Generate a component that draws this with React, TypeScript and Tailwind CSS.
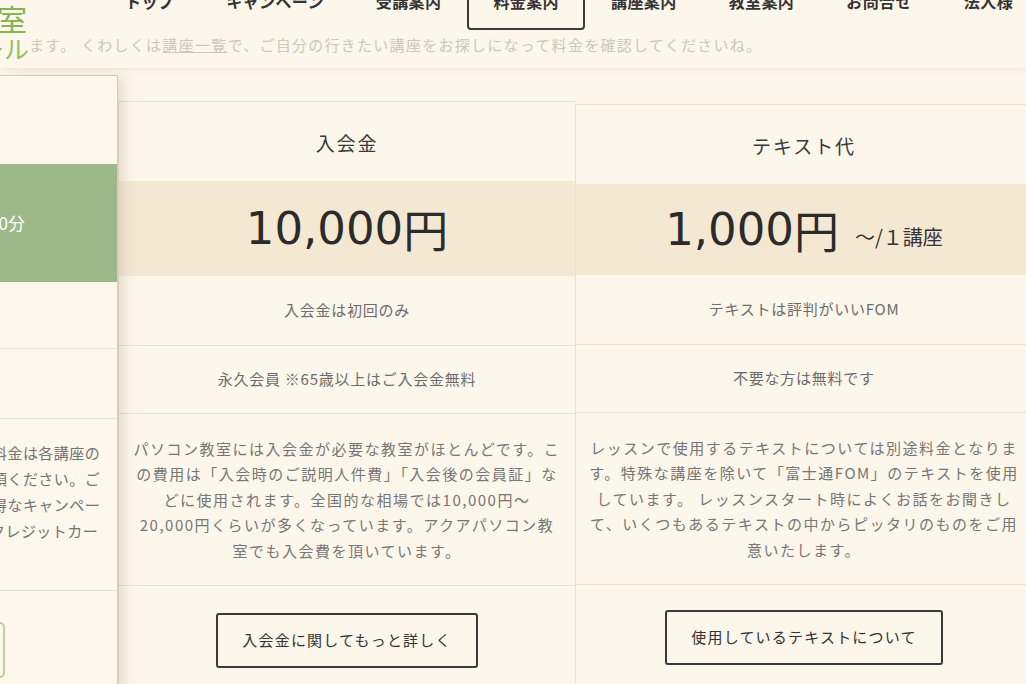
import React from "react";

const navs = ["トップ", "キャンペーン", "受講案内", "料金案内", "講座案内", "教室案内", "お問合せ", "法人様"];

type CardProps = {
  title: string;
  price: string;
  unit?: string;
  r1: string;
  r2: string;
  lines: string[];
  btn: string;
  top: string;
  priceH: string;
  btnPad: string;
};

function Card({ title, price, unit, r1, r2, lines, btn, top, priceH, btnPad }: CardProps) {
  return (
    <section className={`w-[457px] shrink-0 border-t border-l border-[#ebe1cf] ${top}`}>
      <div className="h-[79px] flex items-center justify-center pt-[4px] text-[19px] tracking-[0.1em] text-[#3a3a3a]">
        {title}
      </div>
      <div className={`${priceH} bg-[#f5e8d3] flex items-center justify-center text-[#2b2b2b]`}>
        <span className="font-['DejaVu_Sans',sans-serif] text-[45px] leading-none">{price}</span>
        <span className="text-[45px] leading-none">円</span>
        {unit && <span className="ml-[16px] mt-[14px] text-[20px] leading-none text-[#333]">{unit}</span>}
      </div>
      <div className="h-[70px] border-b border-[#ebe1cf] flex items-center justify-center text-[15px] tracking-[0.05em] text-[#6c6c6c]">
        {r1}
      </div>
      <div className="h-[68px] border-b border-[#ebe1cf] flex items-center justify-center text-[15px] tracking-[0.05em] text-[#6c6c6c]">
        {r2}
      </div>
      <div className="h-[172px] border-b border-[#ebe1cf] flex flex-col items-center justify-center text-[15px] leading-[25.5px] tracking-[0.1em] text-[#767676] whitespace-nowrap">
        {lines.map((l, i) => (
          <div key={i}>{l}</div>
        ))}
      </div>
      <div className={`h-[140px] flex justify-center ${btnPad}`}>
        <div className="h-[55px] px-[24px] border-2 border-[#3a3a3a] rounded-[3px] flex items-center text-[15px] tracking-[0.08em] text-[#333]">
          {btn}
        </div>
      </div>
    </section>
  );
}

function LeftCard() {
  const lines = ["料金は各講座の", "頂ください。ご", "得なキャンペー", "クレジットカー"];
  return (
    <section className="w-[118px] shrink-0 mt-[7px] relative z-10 bg-[#fdf7ec] border-t border-r border-[#c6d5b0] shadow-[8px_0_12px_-3px_rgba(110,90,60,0.18)] overflow-hidden">
      <div className="h-[88px]" />
      <div className="h-[118px] bg-[#9eb989] flex items-center justify-end pr-[92px] text-white text-[17px] whitespace-nowrap">
        1回 60分
      </div>
      <div className="h-[67px] border-b border-[#ebe1cf]" />
      <div className="h-[70px] border-b border-[#ebe1cf]" />
      <div className="h-[172px] border-b border-[#ebe1cf] pt-[21px] text-[15px] leading-[26px] tracking-[0.03em] text-[#737373] whitespace-nowrap">
        {lines.map((l, i) => (
          <div key={i} className={i === 3 ? "-ml-[10px]" : "-ml-[8px]"}>
            {l}
          </div>
        ))}
      </div>
      <div className="h-[120px] pt-[31px]">
        <div className="w-[205px] -ml-[200px] h-[56px] border-2 border-[#b9d0a0] rounded-[5px]" />
      </div>
    </section>
  );
}

export default function App() {
  return (
    <div className="w-[1026px] h-[684px] overflow-hidden bg-[#fdf6ea] font-['Noto_Sans_CJK_JP','Noto_Sans',sans-serif] text-[#333]">
      <header className="h-[68px] flex relative z-20 bg-[#fdf6ea] shadow-[0_2px_5px_rgba(120,100,70,0.10)]">
        <div className="w-[29px] shrink-0 flex flex-col pt-[2px] overflow-hidden text-[#84b552]">
          <div className="flex justify-end pr-[2px] h-[32px] text-[30px] leading-[32px] whitespace-nowrap">
            アクアパソコン教室
          </div>
          <div className="flex justify-end h-[28px] text-[25px] leading-[28px] whitespace-nowrap text-[#93bf63]">
            スクール
          </div>
        </div>
        <div className="flex flex-col min-w-0">
          <nav className="flex -mt-[14px] ml-[70px] text-[16px] tracking-[0.025em] font-bold whitespace-nowrap text-[#333]">
            {navs.map((n) => (
              <div
                key={n}
                className={`px-[24px] pt-[1px] pb-[15px] border-2 rounded-b-[4px] leading-[24px] ${
                  n === "料金案内" ? "border-[#3a3a3a]" : "border-transparent"
                }`}
              >
                {n}
              </div>
            ))}
          </nav>
          <p className="mt-[4px] text-[15px] leading-[22px] tracking-[0.085em] text-[#cdc7bc] whitespace-nowrap">
            ます。 くわしくは<span className="underline">講座一覧</span>で、ご自分の行きたい講座をお探しになって料金を確認してくださいね。
          </p>
        </div>
      </header>
      <main className="flex items-start">
        <LeftCard />
        <Card
          top="mt-[33px]"
          priceH="h-[95px]"
          btnPad="pt-[27px]"
          title="入会金"
          price="10,000"
          r1="入会金は初回のみ"
          r2="永久会員 ※65歳以上はご入会金無料"
          lines={[
            "パソコン教室には入会金が必要な教室がほとんどです。こ",
            "の費用は「入会時のご説明人件費」「入会後の会員証」な",
            "どに使用されます。全国的な相場では10,000円〜",
            "20,000円くらいが多くなっています。アクアパソコン教",
            "室でも入会費を頂いています。",
          ]}
          btn="入会金に関してもっと詳しく"
        />
        <Card
          top="mt-[36px]"
          priceH="h-[91px]"
          btnPad="pt-[25px]"
          title="テキスト代"
          price="1,000"
          unit="〜/１講座"
          r1="テキストは評判がいいFOM"
          r2="不要な方は無料です"
          lines={[
            "レッスンで使用するテキストについては別途料金となりま",
            "す。特殊な講座を除いて「富士通FOM」のテキストを使用",
            "しています。 レッスンスタート時によくお話をお聞きし",
            "て、いくつもあるテキストの中からピッタリのものをご用",
            "意いたします。",
          ]}
          btn="使用しているテキストについて"
        />
      </main>
    </div>
  );
}
